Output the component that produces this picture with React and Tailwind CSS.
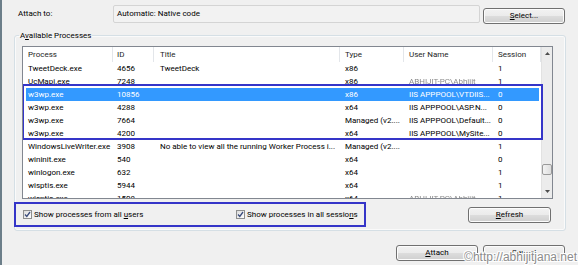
import { useState } from "react"

const cols = [
  { key: "p", label: "Process", cls: "w-[90px] pl-[5px]" },
  { key: "id", label: "ID", cls: "w-[41px] pl-[4px]" },
  { key: "t", label: "Title", cls: "w-[186px] pl-[6px]" },
  { key: "ty", label: "Type", cls: "w-[64px] pl-[5px]" },
  { key: "u", label: "User Name", cls: "w-[89px] pl-[5px]" },
  { key: "s", label: "Session", cls: "w-[48px] pl-[5px]" },
]

const rows = [
  { p: "TweetDeck.exe", id: "4656", t: "TweetDeck", ty: "x86", u: "", s: "1" },
  { p: "UcMapi.exe", id: "7248", t: "", ty: "x86", u: "ABHIJIT-PC\\Abhijit", s: "1", blur: true },
  { p: "w3wp.exe", id: "10856", t: "", ty: "x86", u: "IIS APPPOOL\\VTDIIS...", s: "0", sel: true },
  { p: "w3wp.exe", id: "4288", t: "", ty: "x64", u: "IIS APPPOOL\\ASP.N...", s: "0" },
  { p: "w3wp.exe", id: "7664", t: "", ty: "Managed (v2....", u: "IIS APPPOOL\\Default...", s: "0" },
  { p: "w3wp.exe", id: "4200", t: "", ty: "x64", u: "IIS APPPOOL\\MySite...", s: "0" },
  { p: "WindowsLiveWriter.exe", id: "3908", t: "No able to view all the running Worker Process i...", ty: "Managed (v2....", u: "", s: "1" },
  { p: "wininit.exe", id: "540", t: "", ty: "x64", u: "", s: "0" },
  { p: "winlogon.exe", id: "632", t: "", ty: "x64", u: "", s: "1" },
  { p: "wisptis.exe", id: "5944", t: "", ty: "x64", u: "", s: "1" },
  { p: "wisptis.exe", id: "1508", t: "", ty: "x64", u: "ABHIJIT-PC\\Abhijit", s: "1", blur: true },
]

const btn =
  "h-[16px] w-[82px] rounded-[3px] border border-[#707070] bg-[linear-gradient(#f2f2f2,#ebebeb_50%,#dddddd_50%,#cfcfcf)] shadow-[inset_0_0_0_1px_#fcfcfc] flex items-center justify-center leading-none"

function Check({ checked, onClick }) {
  return (
    <button
      onClick={onClick}
      className="w-[9px] h-[9px] border border-[#8e8f8f] bg-[linear-gradient(135deg,#dcdcdc,#ffffff)] flex items-center justify-center shrink-0"
    >
      {checked && (
        <svg width="7" height="7" viewBox="0 0 7 7">
          <path d="M1 3.5 L2.8 5.5 L6 1" fill="none" stroke="#3c4d7d" strokeWidth="1.3" />
        </svg>
      )}
    </button>
  )
}

export default function App() {
  const [allUsers, setAllUsers] = useState(true)
  const [allSessions, setAllSessions] = useState(true)

  return (
    <div className="w-[578px] h-[265px] bg-[#f0f0f0] border-l-2 border-[#6c7e89] relative overflow-hidden font-['Roboto',sans-serif] text-[8px] text-black">
      {/* Attach to */}
      <div className="flex items-start pt-[5px] pl-[16px]">
        <div className="w-[95px] h-[18px] flex items-center">Attach to:</div>
        <div className="w-[367px] h-[18px] border border-[#d4d4d4] rounded-[2px] bg-[#f2f2f2] flex items-center pl-[3px]">
          Automatic: Native code
        </div>
        <button className={btn + " ml-[3px] mt-[3px]"}>
          <span><u>S</u>elect...</span>
        </button>
      </div>

      {/* Available Processes */}
      <fieldset className="ml-[12px] mt-[6px] w-[552px] h-[201px] border border-[#d5dfe5] rounded-[3px] shadow-[inset_0_0_0_1px_#fafafa] pl-[7px] pr-[12px]">
        <legend className="-ml-[3px] px-[1px] leading-[11px]">
          A<u>v</u>ailable Processes
        </legend>

        <div className="mt-[5px] w-[531px] h-[153px] border border-[#828790] bg-white flex overflow-hidden">
          <div className="w-[518px] relative">
            {/* header */}
            <div className="flex h-[15px] text-[#1e1e1e]">
              {cols.map((c) => (
                <div key={c.key} className={c.cls + " border-r border-[#e3e6ea] flex items-center whitespace-nowrap overflow-hidden"}>
                  {c.label}
                </div>
              ))}
            </div>
            {rows.map((r, i) => (
              <div key={i} className={"flex h-[13px] leading-[13px] " + (r.sel ? "bg-[#3399ff] text-white" : "")}>
                {cols.map((c) => (
                  <div
                    key={c.key}
                    className={
                      c.cls +
                      " whitespace-nowrap overflow-hidden" +
                      (c.key === "u" && r.blur ? " text-[#8a8a8a] blur-[0.6px]" : "")
                    }
                  >
                    {r[c.key]}
                  </div>
                ))}
              </div>
            ))}
            {/* annotation around w3wp rows */}
            <div className="absolute left-[-1px] top-[37px] w-[521px] h-[56px] border-2 border-[#3535c8] shadow-[inset_2px_0_0_white,inset_-2px_0_0_white]" />
          </div>

          {/* scrollbar */}
          <div className="w-[11px] bg-[#ececec] border-l border-[#e2e2e2] flex flex-col">
            <div className="h-[13px] flex items-center justify-center">
              <svg width="5" height="3" viewBox="0 0 5 3">
                <path d="M0 3 L2.5 0 L5 3 Z" fill="#4d4d4d" />
              </svg>
            </div>
            <div className="flex-1">
              <div className="mt-[104px] h-[11px] w-[10px] border border-[#9a9a9a] rounded-[2px] bg-[linear-gradient(90deg,#f3f3f3,#dedede)]" />
            </div>
            <div className="h-[13px] flex items-center justify-center">
              <svg width="5" height="3" viewBox="0 0 5 3">
                <path d="M0 0 L2.5 3 L5 0 Z" fill="#4d4d4d" />
              </svg>
            </div>
          </div>
        </div>

        <div className="flex items-center justify-between mt-[3px]">
          <div className="-ml-[8px] w-[352px] h-[25px] border-2 border-[#3535c8] flex items-center pl-[7px]">
            <div className="w-[213px] flex items-center gap-[2px]">
              <Check checked={allUsers} onClick={() => setAllUsers(!allUsers)} />
              <span>Show processes from all <u>u</u>sers</span>
            </div>
            <div className="flex items-center gap-[2px]">
              <Check checked={allSessions} onClick={() => setAllSessions(!allSessions)} />
              <span>Show processes in all sessio<u>n</u>s</span>
            </div>
          </div>
          <button className={btn + " w-[83px] mr-[2px]"}>
            <span><u>R</u>efresh</span>
          </button>
        </div>
      </fieldset>

      {/* bottom buttons */}
      <div className="flex justify-end gap-[5px] pr-[13px] mt-[14px]">
        <button className={btn + " border-[#3c7fb1] shadow-[inset_0_0_0_1px_#a6def4]"}>
          <span><u>A</u>ttach</span>
        </button>
        <button className={btn}>Cancel</button>
      </div>

      {/* watermark */}
      <div className="absolute right-[1px] bottom-[2px] font-['Liberation_Sans',sans-serif] text-[12px] leading-none text-[#8c8c8c] [text-shadow:1px_0_0_#fff,-1px_0_0_#fff,0_1px_0_#fff,0_-1px_0_#fff,1px_1px_0_#fff,-1px_-1px_0_#fff,1px_-1px_0_#fff,-1px_1px_0_#fff]">
        ©http://abhijitjana.net
      </div>
    </div>
  )
}
